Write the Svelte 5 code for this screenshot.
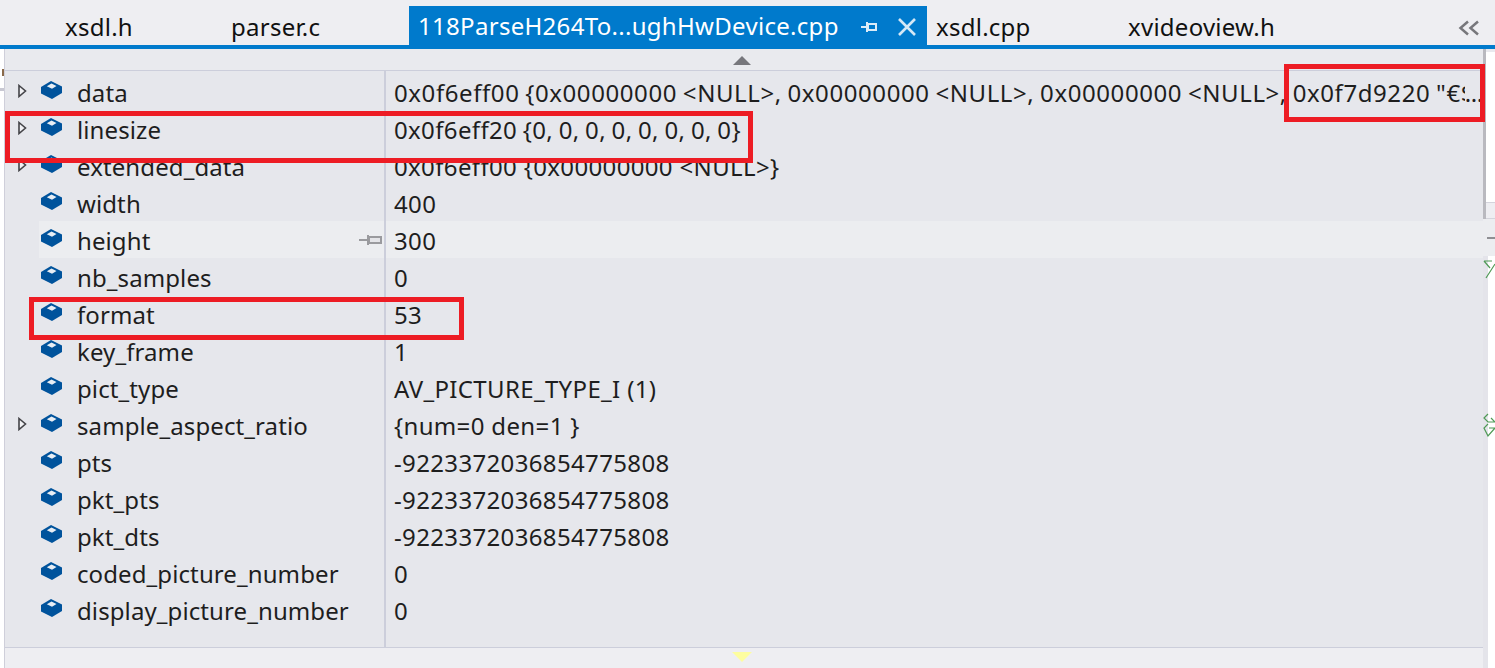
<script lang="ts">
  const tabs = [
    { name: 'xsdl.h', width: 166 },
    { name: 'parser.c', width: 187 },
  ]
  const tabsAfter = [
    { name: 'xsdl.cpp', width: 192 },
    { name: 'xvideoview.h', width: 300 },
  ]

  // fit: the reference font spaces some values differently, nudge those rows
  const rows = [
    { name: 'data', value: '0x0f6eff00 {0x00000000 <NULL>, 0x00000000 <NULL>, 0x00000000 <NULL>, 0x0f7d9220 "€', cut: '$', tail: '...', expand: true, fit: 'wide' },
    { name: 'linesize', value: '0x0f6eff20 {0, 0, 0, 0, 0, 0, 0, 0}', expand: true, fit: 'tight' },
    { name: 'extended_data', value: '0x0f6eff00 {0x00000000 <NULL>}', expand: true },
    { name: 'width', value: '400' },
    { name: 'height', value: '300', hover: true },
    { name: 'nb_samples', value: '0' },
    { name: 'format', value: '53' },
    { name: 'key_frame', value: '1' },
    { name: 'pict_type', value: 'AV_PICTURE_TYPE_I (1)' },
    { name: 'sample_aspect_ratio', value: '{num=0 den=1 }', expand: true },
    { name: 'pts', value: '-9223372036854775808' },
    { name: 'pkt_pts', value: '-9223372036854775808' },
    { name: 'pkt_dts', value: '-9223372036854775808' },
    { name: 'coded_picture_number', value: '0' },
    { name: 'display_picture_number', value: '0' },
  ]
</script>

<div class="page">
  <header class="tabbar">
    {#each tabs as tab}
      <div class="tab" style="width: {tab.width}px">{tab.name}</div>
    {/each}
    <div class="tab active">
      <span class="active-name">118ParseH264To...ughHwDevice.cpp</span>
      <svg class="pin" width="18" height="14" viewBox="0 0 18 14">
        <path d="M0 6H5V2H7V3H16V11H7V12H5V8H0ZM8 5V9H14V5Z" fill="#dcecf8" fill-rule="evenodd" />
      </svg>
      <svg class="close" width="20" height="20" viewBox="0 0 20 20">
        <path d="M2 2L18 18M18 2L2 18" stroke="#d5e8f6" stroke-width="2.600" />
      </svg>
    </div>
    {#each tabsAfter as tab}
      <div class="tab" style="width: {tab.width}px">{tab.name}</div>
    {/each}
    <svg class="overflow" width="22" height="16" viewBox="0 0 22 16">
      <path d="M10 1.500L2.500 8L10 14.500M20 1.500L12.500 8L20 14.500" fill="none" stroke="#77777c" stroke-width="2.500" />
    </svg>
  </header>
  <div class="accent"></div>

  <div class="content">
    <div class="gutter-left">
      <div class="gutter-brown"></div>
      <div class="gutter-mark"></div>
    </div>

    <main class="panel">
      <div class="scroll-strip top"><span class="arrow-up"></span></div>
      <div class="rows">
        {#each rows as row}
          <div class="row" class:hover={row.hover}>
            <div class="name-cell">
              <span class="expander">
                {#if row.expand}
                  <svg width="9" height="14" viewBox="0 0 9 14">
                    <path d="M1 1.500L7.500 7L1 12.500Z" fill="#f1f1f4" stroke="#444448" stroke-width="1.600" />
                  </svg>
                {/if}
              </span>
              <svg class="field-icon" width="21" height="18" viewBox="0 0 21 18">
                <path d="M10 0L21 5.500V12L11 18L0 12.500V6Z" fill="#00539c" />
                <path d="M10.500 2.500L15.500 5L11 7.800L5.800 5.300Z" fill="#e8eef4" />
              </svg>
              <span class="name">{row.name}</span>
              {#if row.hover}
                <svg class="row-pin" width="24" height="14" viewBox="0 0 24 14">
                  <path d="M0 6H8V2H10V3H23V11H10V12H8V8H0Z" fill="#9a9a9e" />
                  <path d="M11 5H21V9H11Z" fill="#e4e4e8" />
                </svg>
              {/if}
            </div>
            <div class="value-cell" class:wide={row.fit === 'wide'} class:tight={row.fit === 'tight'}>
              {row.value}{#if row.cut}<span class="cut">{row.cut}</span><span class="tail">{row.tail}</span>{/if}
            </div>
          </div>
        {/each}
      </div>
      <div class="scroll-strip bottom"><span class="arrow-down"></span></div>
    </main>

    <aside class="gutter-right">
      <div class="edge"></div>
      <div class="editor-white"></div>
      <div class="editor-band"></div>
      <div class="editor-hover"><span class="plus"></span></div>
      <div class="editor-rest">
        <svg class="squiggle first" width="12" height="22" viewBox="0 0 12 22">
          <path d="M1 3H9M1 3L7 10M12 6L3 20" fill="none" stroke="#4f9a56" stroke-width="1.200" />
        </svg>
        <svg class="squiggle second" width="12" height="26" viewBox="0 0 12 26">
          <path d="M5 1L1 5L5 9H12M12 9L8 5M5 11L1 15L5 23L12 15H6" fill="none" stroke="#4f9a56" stroke-width="1.200" />
        </svg>
      </div>
    </aside>

    <div class="callout c1"></div>
    <div class="callout c2"></div>
    <div class="callout c3"></div>
  </div>
</div>

<style>
  :global(body) {
    margin: 0;
    background: #fff;
  }

  .page {
    width: 1495px;
    height: 668px;
    display: flex;
    flex-direction: column;
    overflow: hidden;
    font-family: "Noto Sans", "Open Sans", sans-serif;
    font-size: 24px;
    color: #1e1e1e;
  }

  /* --- Tabs --- */

  .tabbar {
    height: 45px;
    flex-shrink: 0;
    display: flex;
    align-items: flex-end;
    padding-left: 56px;
    background: #eeeef2;
    position: relative;
  }

  .tab {
    height: 39px;
    box-sizing: border-box;
    padding-left: 9px;
    line-height: 42px;
    letter-spacing: 0.25px;
    color: #111;
    white-space: nowrap;
    flex-shrink: 0;
  }

  .tab.active {
    width: 518px;
    background: #007acc;
    color: #fff;
    display: flex;
    align-items: center;
    letter-spacing: 0.3px;
  }

  .active-name {
    width: 443px;
    flex-shrink: 0;
  }

  .close {
    margin-left: 18px;
    margin-top: 3px;
  }

  .pin {
    margin-top: 3px;
  }

  .overflow {
    position: absolute;
    right: 15px;
    top: 20px;
  }

  .accent {
    height: 4px;
    flex-shrink: 0;
    background: #007acc;
  }

  /* --- Content --- */

  .content {
    flex: 1;
    display: flex;
    position: relative;
    min-height: 0;
  }

  .gutter-left {
    width: 4px;
    flex-shrink: 0;
    background: #fff;
  }

  .gutter-brown {
    width: 2px;
    height: 7px;
    margin: 20px 0 0 2px;
    background: #8a6a4a;
  }

  .gutter-mark {
    height: 3px;
    margin-top: 12px;
    background: #c8c8d2;
  }

  .panel {
    width: 1479px;
    flex-shrink: 0;
    display: flex;
    flex-direction: column;
    background: #e6e7ec;
    box-sizing: border-box;
    border-left: 1px solid #cfcfda;
  }

  .scroll-strip {
    display: flex;
    justify-content: center;
    flex-shrink: 0;
  }

  .scroll-strip.top {
    height: 22px;
    box-sizing: border-box;
    border-bottom: 1px solid #cccedb;
    padding: 7px 5px 0 0;
    background: #e9eaee;
  }

  .scroll-strip.bottom {
    flex: 1;
    background: #eeeef2;
    border-top: 1px solid #cccedb;
    padding: 4px 5px 0 0;
  }

  .arrow-up {
    width: 0;
    height: 0;
    border-left: 9px solid transparent;
    border-right: 9px solid transparent;
    border-bottom: 9px solid #77777c;
  }

  .arrow-down {
    width: 0;
    height: 0;
    border-left: 10px solid transparent;
    border-right: 10px solid transparent;
    border-top: 10px solid #fdfd9f;
  }

  .rows {
    height: 576px;
    flex-shrink: 0;
    box-sizing: border-box;
    padding-top: 2px;
    background: linear-gradient(#cccedb, #cccedb) 379px 0 / 2px 100% no-repeat #e6e7ec;
  }

  .row {
    height: 37px;
    display: flex;
    align-items: center;
  }

  .row.hover {
    background: linear-gradient(#cccedb, #cccedb) 379px 0 / 2px 100% no-repeat,
      linear-gradient(#ecedf0, #ecedf0) 34px 0 / 100% 100% no-repeat;
  }

  .name-cell {
    width: 382px;
    flex-shrink: 0;
    height: 100%;
    box-sizing: border-box;
    display: flex;
    align-items: center;
    position: relative;
  }

  .expander {
    width: 36px;
    flex-shrink: 0;
    box-sizing: border-box;
    padding-left: 13px;
    display: flex;
    margin-top: -2px;
  }

  .field-icon {
    flex-shrink: 0;
    margin-top: -3px;
  }

  .name {
    margin-left: 15px;
    margin-top: 1px;
    letter-spacing: 0.1px;
    white-space: nowrap;
  }

  .row-pin {
    position: absolute;
    left: 354px;
    top: 12px;
  }

  .value-cell {
    padding-left: 7px;
    margin-top: 1px;
    letter-spacing: 0.35px;
    white-space: nowrap;
  }

  .value-cell.wide {
    letter-spacing: 0.58px;
    word-spacing: -1px;
  }

  .value-cell.tight {
    word-spacing: -1px;
  }

  /* the third byte is half hidden under the ellipsis in the debugger */
  .cut {
    display: inline-block;
    width: 4px;
    overflow: hidden;
    vertical-align: bottom;
  }

  .tail {
    letter-spacing: -0.5px;
  }

  /* --- Right edge, editor peeking out behind the tooltip --- */

  .gutter-right {
    flex: 1;
    position: relative;
    display: flex;
    flex-direction: column;
    background: #e9e9ee;
  }

  .edge {
    position: absolute;
    left: 0;
    top: 0;
    bottom: 0;
    width: 3px;
    background: #b9b9bf;
  }

  .editor-white {
    height: 150px;
    margin-top: 3px;
    background: #fff;
    flex-shrink: 0;
  }

  .editor-band {
    height: 15px;
    flex-shrink: 0;
    background: #eeeef2;
    border: 1px solid #d4d4dc;
    border-right: none;
  }

  .editor-hover {
    height: 37px;
    flex-shrink: 0;
    background: #ecedf0;
    position: relative;
  }

  .plus {
    position: absolute;
    left: 4px;
    top: 18px;
    width: 8px;
    height: 2px;
    background: #8f8f93;
  }

  .editor-rest {
    flex: 1;
    background: linear-gradient(#e4e4ea, #e4e4ea) 0 0 / 5px 100% no-repeat #fff;
    position: relative;
  }

  .squiggle {
    position: absolute;
    left: 0;
  }

  .squiggle.first {
    top: 2px;
  }

  .squiggle.second {
    top: 157px;
  }

  /* --- Red annotation boxes drawn on the screenshot --- */

  .callout {
    position: absolute;
    box-sizing: border-box;
    border: 5px solid #ed1c24;
  }

  .c1 {
    left: 5px;
    top: 62px;
    width: 748px;
    height: 52px;
  }

  .c2 {
    left: 1284px;
    top: 15px;
    width: 201px;
    height: 58px;
  }

  .c3 {
    left: 29px;
    top: 248px;
    width: 435px;
    height: 43px;
  }
</style>
